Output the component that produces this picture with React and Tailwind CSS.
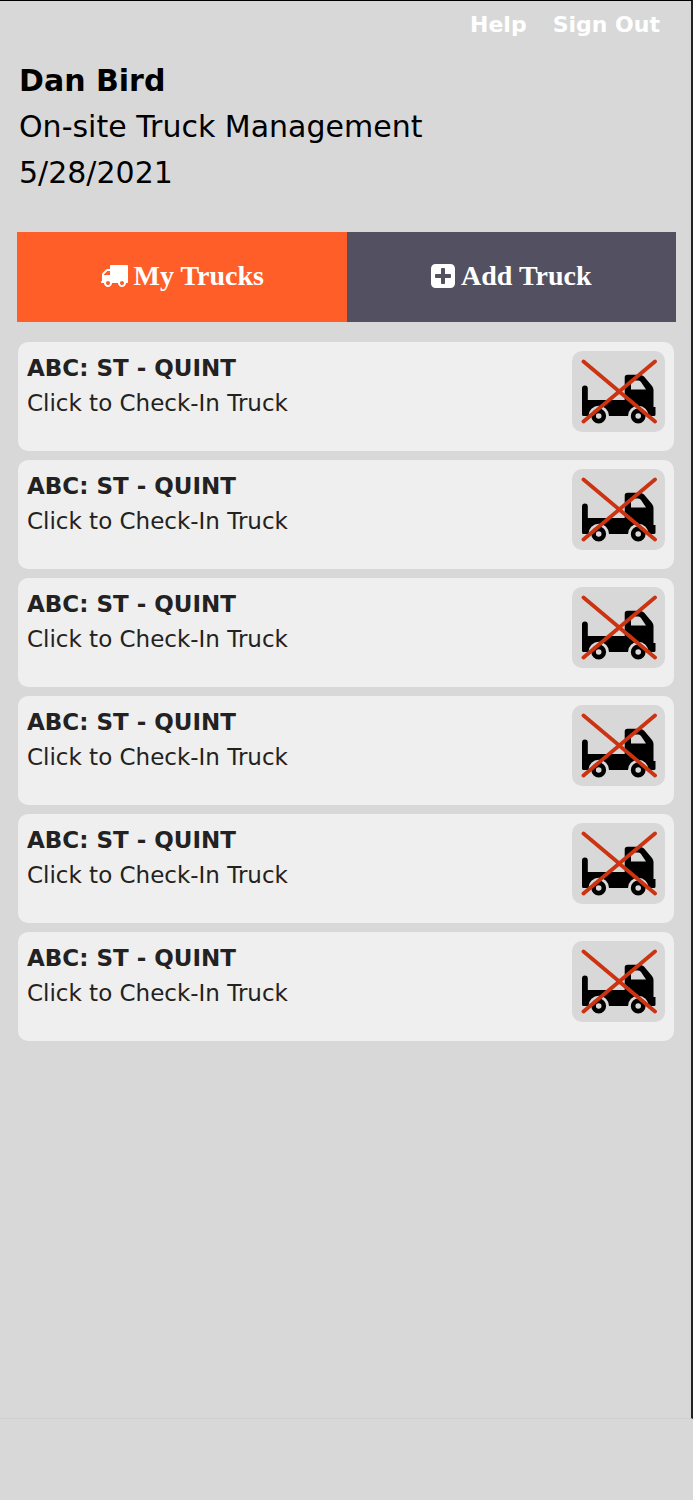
import React from "react";

const trucks = Array.from({ length: 6 }, (_, i) => ({
  id: i + 1,
  name: "ABC: ST - QUINT",
  action: "Click to Check-In Truck",
}));

function DeliveryIcon() {
  return (
    <svg viewBox="0 0 1792 1408" className="h-[22px] w-7" aria-hidden="true">
      <path
        fill="currentColor"
        transform="matrix(1 0 0 -1 0 1280)"
        d="M640 128q0 52 -38 90t-90 38t-90 -38t-38 -90t38 -90t90 -38t90 38t38 90zM256 640h384v256h-158q-13 0 -22 -9l-195 -195q-9 -9 -9 -22v-30zM1536 128q0 52 -38 90t-90 38t-90 -38t-38 -90t38 -90t90 -38t90 38t38 90zM1792 1216v-1024q0 -15 -4 -26.5t-13.5 -18.5t-16.5 -11.5t-23.5 -6t-22.5 -2t-25.5 0t-22.5 .5q0 -106 -75 -181t-181 -75t-181 75t-75 181h-384q0 -106 -75 -181t-181 -75t-181 75t-75 181h-64q-3 0 -22.5 -.5t-25.5 0t-22.5 2t-23.5 6t-16.5 11.5t-13.5 18.5t-4 26.5q0 26 19 45t45 19v320q0 8 -.5 35t0 38t2.5 34.5t6.5 37t14 30.5t22.5 30l198 198q19 19 50.5 32t58.5 13h160v192q0 26 19 45t45 19h1024q26 0 45 -19t19 -45z"
      />
    </svg>
  );
}

function PlusIcon() {
  return (
    <svg viewBox="0 0 1536 1536" className="size-6" aria-hidden="true">
      <path
        fill="currentColor"
        transform="matrix(1 0 0 -1 0 1408)"
        d="M1280 576v128q0 26 -19 45t-45 19h-320v320q0 26 -19 45t-45 19h-128q-26 0 -45 -19t-19 -45v-320h-320q-26 0 -45 -19t-19 -45v-128q0 -26 19 -45t45 -19h320v-320q0 -26 19 -45t45 -19h128q26 0 45 19t19 45v320h320q26 0 45 19t19 45zM1536 1120v-960q0 -119 -84.5 -203.5t-203.5 -84.5h-960q-119 0 -203.5 84.5t-84.5 203.5v960q0 119 84.5 203.5t203.5 84.5h960q119 0 203.5 -84.5t84.5 -203.5z"
      />
    </svg>
  );
}

function CrossedTruckIcon() {
  return (
    <svg viewBox="0 0 76 66" className="h-[66px] w-[76px]" aria-hidden="true">
      <path
        fillRule="evenodd"
        d="M1 29.500A2.900 2.900 0 0 1 6.800 29.500V41H43.700V18.500Q43.700 15.700 46.500 15.700H58Q61 15.700 63 17.500L71 27Q72.500 29 72.500 31V48H74.500V55.500Q74.500 57 73 57H67.500A10.200 10.200 0 0 0 47 57H28A10.200 10.200 0 0 0 7.500 57H2.500Q1 57 1 55.500ZM51 21.500Q50 21.500 50 22.500V30.500H65L60 23Q59 21.500 57.500 21.500Z"
      />
      <circle cx="17.700" cy="57" r="5.100" fill="none" stroke="#000" strokeWidth="4.600" />
      <circle cx="57.200" cy="57" r="5.100" fill="none" stroke="#000" strokeWidth="4.600" />
      <path d="M2.500 2.500L74 62.500M74 2.500L2.500 62.500" fill="none" stroke="#cc3311" strokeWidth="3.800" strokeLinecap="round" />
    </svg>
  );
}

export default function App() {
  return (
    <div className="min-h-screen bg-[#d8d8d8] font-['DejaVu_Sans',sans-serif]">
      <main className="min-h-[1419px] border-t border-r-2 border-b border-t-black border-r-[#222] border-b-[#cfcfcf] pr-[15px] pl-[17px]">
        <nav className="flex justify-end gap-[26px] pt-2 pr-4 text-[22px] leading-8 font-bold text-white">
          <a href="#help">Help</a>
          <a href="#sign-out">Sign Out</a>
        </nav>

        <header className="pt-[17px] pl-0.5 text-[30px] leading-[46px] text-black">
          <h1 className="font-bold">Dan Bird</h1>
          <p>On-site Truck Management</p>
          <p>5/28/2021</p>
        </header>

        <div className="mt-9 grid grid-cols-2 font-['Liberation_Serif',serif] text-[28px] font-bold text-white">
          <button type="button" className="flex h-[90px] items-center justify-center gap-1.5 bg-[#ff5e29] pb-0.5">
            <DeliveryIcon />
            My Trucks
          </button>
          <button type="button" className="flex h-[90px] items-center justify-center gap-1.5 bg-[#535161] pb-0.5">
            <PlusIcon />
            Add Truck
          </button>
        </div>

        <ul className="mr-0.5 ml-px mt-5 flex flex-col gap-[9px]">
          {trucks.map((truck) => (
            <li key={truck.id}>
              <button
                type="button"
                className="flex h-[109px] w-full items-start justify-between rounded-[10px] bg-[#efefef] p-[9px] text-left text-[23px] leading-[35px] text-[#222]"
              >
                <span className="flex flex-col">
                  <strong>{truck.name}</strong>
                  <span>{truck.action}</span>
                </span>
                <span className="flex h-[81px] w-[93px] items-center justify-center rounded-[10px] bg-[#d8d8d8]">
                  <CrossedTruckIcon />
                </span>
              </button>
            </li>
          ))}
        </ul>
      </main>
    </div>
  );
}
